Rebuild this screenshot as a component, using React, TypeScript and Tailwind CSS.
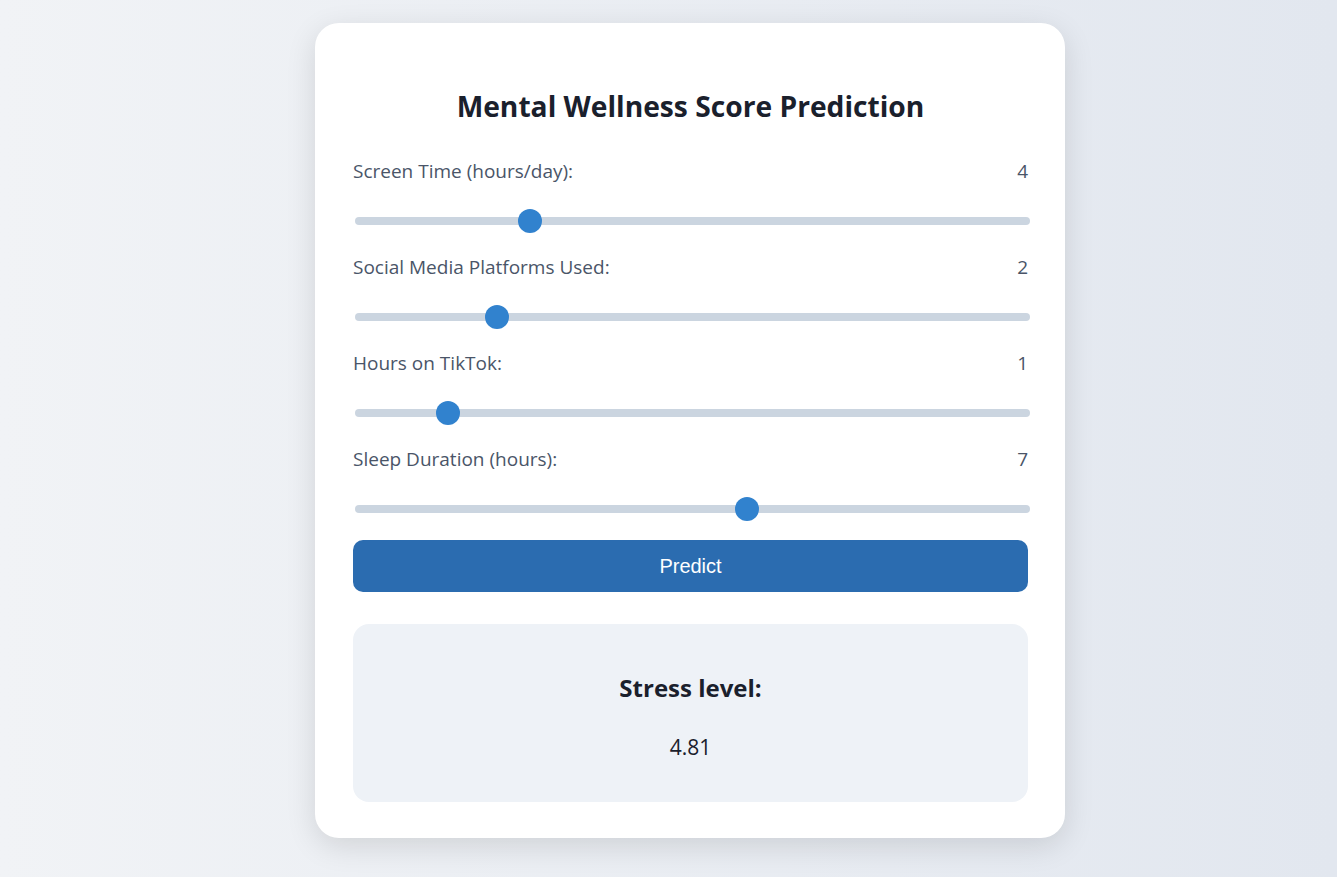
import { useState } from 'react';

type Field = {
  key: string;
  label: string;
  min: number;
  max: number;
};

const fields: Field[] = [
  { key: 'screen', label: 'Screen Time (hours/day):', min: 0, max: 16 },
  { key: 'social', label: 'Social Media Platforms Used:', min: 0, max: 10 },
  { key: 'tiktok', label: 'Hours on TikTok:', min: 0, max: 8 },
  { key: 'sleep', label: 'Sleep Duration (hours):', min: 0, max: 12 },
];

const App = () => {
  const [values, setValues] = useState<Record<string, number>>({
    screen: 4,
    social: 2,
    tiktok: 1,
    sleep: 7,
  });

  return (
    <div className="min-h-[877px] w-full bg-gradient-to-r from-[#f1f3f6] to-[#e2e7ef] flex justify-center pl-[43px] pt-[23px] font-['Open_Sans',sans-serif]">
      <div className="w-[750px] h-[815px] bg-white rounded-[24px] shadow-[0_8px_30px_rgba(0,0,0,0.12)] pl-[38px] pr-[37px] pt-[38px] pb-[37px] flex flex-col">
        <h2 className="mt-[28px] text-[28.2px] leading-[34px] font-bold text-[#1a202c] text-center">
          Mental Wellness Score Prediction
        </h2>

        <div className="mt-[35px] flex flex-col gap-[21px]">
          {fields.map((f) => (
            <div key={f.key} className="flex flex-col gap-[24px]">
              <div className="flex justify-between text-[19px] leading-[27px] text-[#4a5568]">
                <label>{f.label}</label>
                <span>{values[f.key]}</span>
              </div>
              <div className="h-6 flex items-center pl-[2px] -mr-[2px]">
                <input
                  type="range"
                  min={f.min}
                  max={f.max}
                  value={values[f.key]}
                  onChange={(e) => setValues({ ...values, [f.key]: Number(e.target.value) })}
                  className="w-full h-2 appearance-none bg-[#cbd5e0] rounded-full outline-none [&::-webkit-slider-thumb]:appearance-none [&::-webkit-slider-thumb]:w-6 [&::-webkit-slider-thumb]:h-6 [&::-webkit-slider-thumb]:rounded-full [&::-webkit-slider-thumb]:bg-[#3182ce] [&::-webkit-slider-thumb]:cursor-pointer"
                />
              </div>
            </div>
          ))}
        </div>

        <button className="mt-[19px] h-[52px] shrink-0 w-full bg-[#2b6cb0] rounded-[10px] text-white text-[20px] font-['Liberation_Sans',Arial,sans-serif]">
          Predict
        </button>

        <div className="mt-[32px] bg-[#eef2f7] rounded-[16px] pt-[48px] pb-[40px] flex flex-col items-center">
          <h3 className="text-[24px] leading-[32px] font-bold text-[#1a202c]">Stress level:</h3>
          <p className="mt-[28px] text-[21px] leading-[30px] text-[#1a202c]">4.81</p>
        </div>
      </div>
    </div>
  );
};

export default App;
